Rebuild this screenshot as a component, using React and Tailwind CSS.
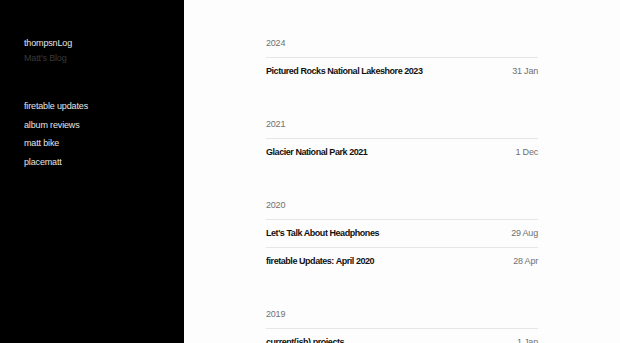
export default function App() {
  const sections = [
    { year: "2024", posts: [["Pictured Rocks National Lakeshore 2023", "31 Jan"]] },
    { year: "2021", posts: [["Glacier National Park 2021", "1 Dec"]] },
    {
      year: "2020",
      posts: [
        ["Let's Talk About Headphones", "29 Aug"],
        ["firetable Updates: April 2020", "28 Apr"],
      ],
    },
    { year: "2019", posts: [["current(ish) projects", "1 Jan"]] },
  ];
  const links = ["firetable updates", "album reviews", "matt bike", "placematt"];
  return (
    <div
      className="flex h-[343px] w-[620px] overflow-hidden bg-[#fdfdfd]"
      style={{ fontFamily: '"Liberation Sans", Arial, sans-serif' }}
    >
      <aside className="w-[184px] shrink-0 bg-black pl-[24px] pt-[36px] text-[9px] tracking-[-0.15px]">
        <div className="leading-[15px] text-[#e6e6e6]">thompsnLog</div>
        <div className="leading-[15px] text-[#3a3a3a]">Matt's Blog</div>
        <nav className="mt-[31px] flex flex-col">
          {links.map((l) => (
            <div key={l} className="leading-[18.5px] text-[#e6e6e6]">
              {l}
            </div>
          ))}
        </nav>
      </aside>
      <main className="flex-1 pl-[82px] pt-[36px]">
        <div className="flex w-[272px] flex-col gap-[32px]">
          {sections.map((s) => (
            <section key={s.year}>
              <div className="mb-[7px] text-[9px] leading-[14px] tracking-[-0.2px] text-[#707070]">
                {s.year}
              </div>
              {s.posts.map(([t, d]) => (
                <div
                  key={t}
                  className="flex h-[28px] items-center justify-between border-t border-[#e6e6e6]"
                >
                  <span className="text-[9px] font-bold tracking-[-0.45px] text-[#111]">{t}</span>
                  <span className="text-[9px] tracking-[-0.2px] text-[#707070]">{d}</span>
                </div>
              ))}
            </section>
          ))}
        </div>
      </main>
    </div>
  );
}
